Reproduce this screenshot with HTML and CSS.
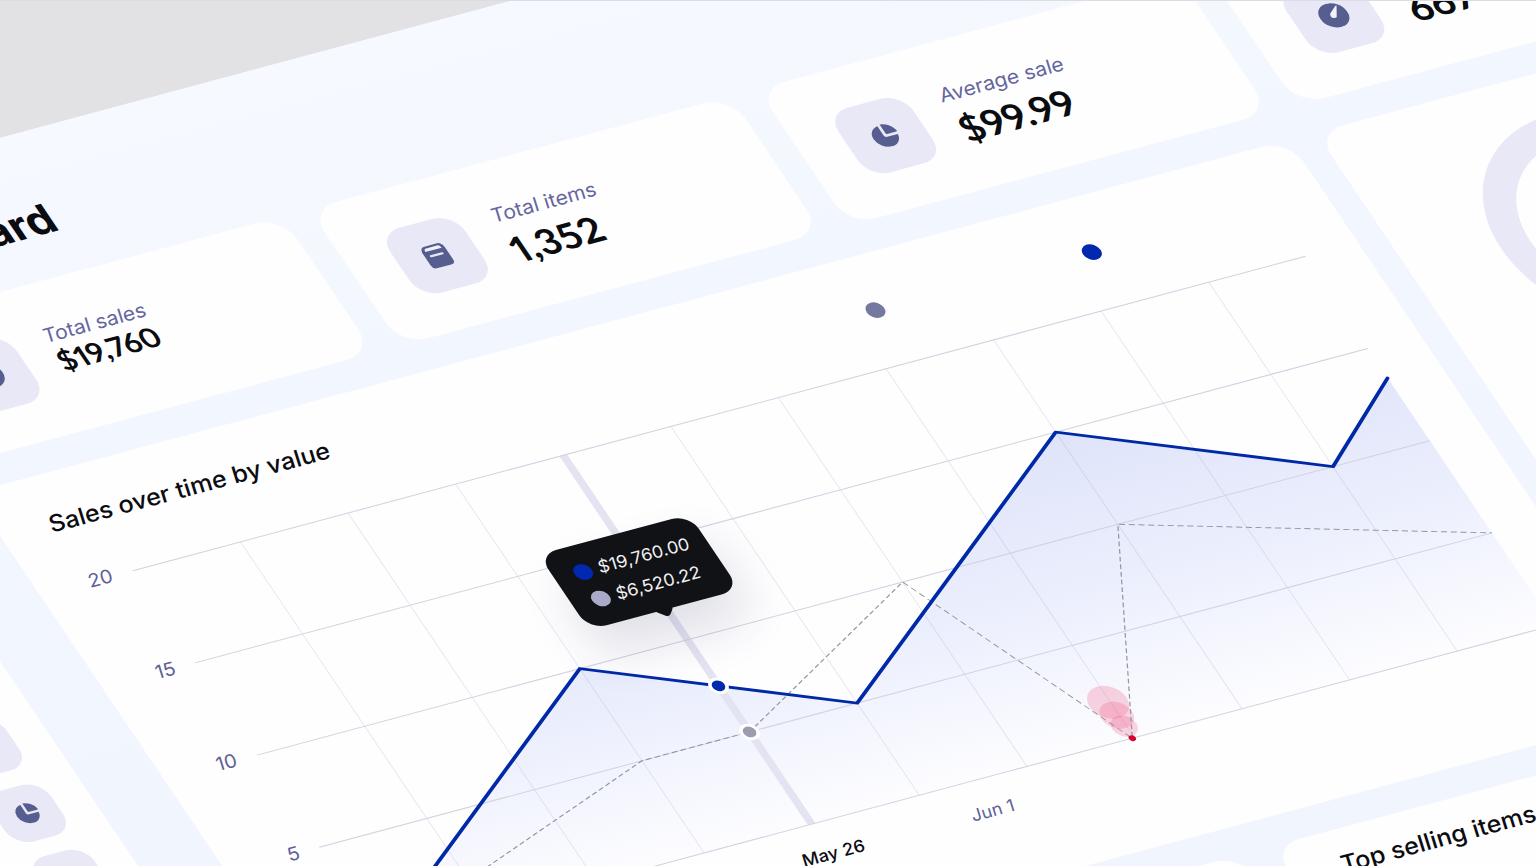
FILE: index.html
```
<!DOCTYPE html>
<html lang="en">
<head>
    <meta charset="UTF-8">
    <meta name="viewport" content="width=device-width, initial-scale=1.0">
    <title>Dashboard</title>
    <link rel="stylesheet" href="styles.css">
</head>
<body>
    <div class="scene">
        <div class="board">
            <nav class="sidebar" aria-label="Main">
                <a class="tile tile_small" href="#" aria-label="Home"></a>
                <a class="tile tile_small" href="#" aria-label="Sales"></a>
                <a class="tile tile_small" href="#" aria-label="Reports">
                    <svg class="icon" viewBox="0 0 24 24">
                        <path d="M10.5 2 A10.5 10.5 0 1 0 22 13.500 H12.500 Q10.500 13.500 10.500 11.500 Z"/>
                        <path d="M13 1 A11 11 0 0 1 23 10 Q23 11 22 11 H14 Q13 11 13 10 Z"/>
                    </svg>
                </a>
                <a class="tile tile_small" href="#" aria-label="Settings"></a>
            </nav>

            <main class="main">
                <h1>Dashboard</h1>

                <section class="cards">
                    <article class="card stat stat_compact">
                        <div class="tile">
                            <svg class="icon" viewBox="0 0 24 24"><circle cx="12" cy="12" r="12"/></svg>
                        </div>
                        <div class="stat_text">
                            <p class="stat_label upright">Total sales</p>
                            <p class="stat_value">$19,760</p>
                        </div>
                    </article>

                    <article class="card stat">
                        <div class="tile">
                            <svg class="icon" viewBox="0 0 24 24">
                                <path d="M6 1 H18 Q21 1 22 6 V19 Q22 23 18 23 H6 Q2 23 2 19 V6 Q3 1 6 1 Z"/>
                                <path class="icon_cut" d="M6.500 3 H17.500 Q18.700 3 19.300 6 H4.700 Q5.300 3 6.500 3 Z"/>
                                <path class="icon_line" d="M7 11 H17"/>
                            </svg>
                        </div>
                        <div class="stat_text">
                            <p class="stat_label upright">Total items</p>
                            <p class="stat_value">1,352</p>
                        </div>
                    </article>

                    <article class="card stat">
                        <div class="tile">
                            <svg class="icon" viewBox="0 0 24 24">
                                <path d="M10.5 2 A10.5 10.5 0 1 0 22 13.500 H12.500 Q10.500 13.500 10.500 11.500 Z"/>
                                <path d="M13 1 A11 11 0 0 1 23 10 Q23 11 22 11 H14 Q13 11 13 10 Z"/>
                            </svg>
                        </div>
                        <div class="stat_text">
                            <p class="stat_label upright">Average sale</p>
                            <p class="stat_value">$99.99</p>
                        </div>
                    </article>

                    <article class="card stat">
                        <div class="tile">
                            <svg class="icon" viewBox="0 0 24 24">
                                <circle cx="12" cy="12" r="12"/>
                                <path class="icon_cut" d="M19 4 L14 13 A2 2 0 0 1 9.500 11 Q9.500 10 11 9 L18 4 Z"/>
                            </svg>
                        </div>
                        <div class="stat_text">
                            <p class="stat_label">&nbsp;</p>
                            <p class="stat_value">667</p>
                        </div>
                    </article>

                    <article class="card sales">
                        <header class="sales_head">
                            <h2 class="upright">Sales over time by value</h2>
                            <ul class="legend">
                                <li><span class="dot dot_slate"></span></li>
                                <li><span class="dot dot_blue"></span></li>
                            </ul>
                        </header>

                        <div class="chart">
                            <ul class="y_axis">
                                <li><span class="upright">20</span></li>
                                <li><span class="upright">15</span></li>
                                <li><span class="upright">10</span></li>
                                <li><span class="upright">5</span></li>
                                <li><span class="upright">0</span></li>
                            </ul>

                            <div class="plot">
                                <!-- one column and one row of the grid are 100 units -->
                                <svg class="plot_svg" viewBox="0 0 1090 400" preserveAspectRatio="none">
                                    <defs>
                                        <linearGradient id="area_fill" gradientUnits="userSpaceOnUse" x1="0" y1="100" x2="0" y2="400">
                                            <stop offset="0" stop-color="#3c58dc" stop-opacity="0.16"/>
                                            <stop offset="0.5" stop-color="#4262e6" stop-opacity="0.1"/>
                                            <stop offset="1" stop-color="#5a70f0" stop-opacity="0.01"/>
                                        </linearGradient>
                                    </defs>
                                    <path class="grid_col" d="M100 0V400M200 0V400M300 0V400M500 0V400M600 0V400M700 0V400M800 0V400M900 0V400M1000 0V400"/>
                                    <path fill="url(#area_fill)" d="M0 400 L300 200 L500 300 L800 100 L1000 200 L1090 132 V400 Z"/>
                                    <path class="band" d="M400 0V400"/>
                                    <path class="grid_row" d="M0 0H1090M0 100H1090M0 200H1090M0 300H1090M0 400H1090"/>
                                    <circle class="pulse" cx="698" cy="361" r="17"/>
                                    <circle class="pulse" cx="698" cy="375" r="14"/>
                                    <circle class="pulse" cx="698" cy="387" r="11"/>
                                    <path class="line_past" d="M0 400 L300 300 L400 300 L600 200 L698 400 L800 200 L1090 300"/>
                                    <path class="line_now" d="M0 400 L300 200 L500 300 L800 100 L1000 200 L1090 132"/>
                                    <circle class="alert" cx="698" cy="400" r="3"/>
                                    <circle class="marker marker_blue" cx="400" cy="250" r="7"/>
                                    <circle class="marker marker_grey" cx="400" cy="300" r="7"/>
                                </svg>

                                <div class="tooltip">
                                    <p><span class="dot dot_blue"></span><span class="upright">$19,760.00</span></p>
                                    <p><span class="dot dot_grey"></span><span class="upright">$6,520.22</span></p>
                                </div>
                            </div>
                        </div>

                        <ul class="x_axis">
                            <li class="current"><span class="upright">May 26</span></li>
                            <li><span class="upright">Jun 1</span></li>
                            <li><span class="upright">Jun 7</span></li>
                        </ul>
                    </article>

                    <article class="card share">
                        <svg class="donut" viewBox="0 0 248 248">
                            <circle cx="124" cy="124" r="109"/>
                        </svg>
                    </article>
                </section>

                <section class="lists">
                    <article class="card"></article>
                    <article class="card">
                        <h2 class="upright">Top selling items</h2>
                    </article>
                </section>
            </main>
        </div>
    </div>
</body>
</html>
```
FILE: styles.css
```
* {
    box-sizing: border-box;
}

body {
    margin: 0;
    font-family: Inter, "Liberation Sans", sans-serif;
    color: #0b0c10;
    background-color: #e2e2e5;
}

h1, h2, p, ul {
    margin: 0;
    padding: 0;
    font-weight: normal;
}

ul {
    list-style-type: none;
}

.scene {
    position: relative;
    height: 100vh;
    overflow: hidden;
    border-top: 1px solid #dcdde2;
}

/* the whole dashboard lies on a tilted plane */
.board {
    position: absolute;
    top: 0;
    left: 0;
    display: flex;
    align-items: flex-start;
    gap: 74px;
    width: calc(100vw + 573px);
    padding: 0 40px 40px;
    background: linear-gradient(#f6f9ff, #f2f6fe 360px, #f0f4fc);
    transform-origin: 0 0;
    transform: matrix(0.966, -0.259, 0.557, 0.827, -460, 260);
}

/* small captions stand straight on the tilted baseline */
.upright {
    display: inline-block;
    transform-origin: 0 70%;
    transform: skewX(-16deg);
}

/* sidebar */
.sidebar {
    flex: none;
    display: flex;
    flex-direction: column;
    gap: 18px;
    margin-top: 471px;
    padding: 40px 35px 300px 31px;
    border-radius: 28px;
    background-color: #fefeff;
}

.tile {
    flex: none;
    display: flex;
    align-items: center;
    justify-content: center;
    width: 78px;
    height: 78px;
    border-radius: 22px;
    background-color: #e8e8f6;
}

.tile_small {
    width: 61px;
    height: 61px;
    border-radius: 20px;
}

.icon {
    width: 28px;
    height: 28px;
    fill: #565e90;
}

.tile_small .icon {
    width: 25px;
    height: 25px;
}

.icon_cut {
    fill: #f0f1fb;
}

.icon_line {
    fill: none;
    stroke: #e8e8f6;
    stroke-width: 2;
    stroke-linecap: round;
}

/* main */
.main {
    flex: 1;
    padding-top: 71px;
}

h1 {
    margin-bottom: 39px;
    font-size: 44px;
    line-height: 48px;
    font-weight: 700;
}

h2 {
    font-size: 25px;
    line-height: 32px;
    font-weight: 500;
}

.cards {
    display: grid;
    grid-template-columns: repeat(4, 1fr);
    gap: 33px 28px;
}

.card {
    border-radius: 28px;
    background-color: #fefeff;
}

.stat {
    display: flex;
    gap: 30px;
    padding: 44px 46px 43px;
}

.stat_label {
    color: #6466a0;
    font-size: 21px;
    line-height: 28px;
}

.stat_value {
    margin-top: 4px;
    font-family: Lato, "Liberation Sans", sans-serif;
    font-size: 39px;
    line-height: 44px;
    font-weight: 700;
    font-variant-numeric: proportional-nums;
}

.stat_compact .stat_value {
    margin-top: 0;
    font-size: 30px;
    line-height: 30px;
}

/* sales chart */
.sales {
    grid-column: span 3;
    padding: 38px 54px 46px 48px;
}

.sales_head {
    display: flex;
    align-items: flex-end;
    justify-content: space-between;
    margin-bottom: 54px;
}

.legend {
    display: flex;
    gap: 30px;
}

.legend li {
    width: 194px;
}

.dot {
    flex: none;
    display: block;
    width: 18px;
    height: 18px;
    border-radius: 50%;
}

.dot_slate {
    background-color: #75789f;
}

.dot_blue {
    background-color: #0029b0;
}

.dot_grey {
    background-color: #aaaac8;
}

.chart {
    display: flex;
    gap: 22px;
}

.y_axis {
    display: flex;
    flex-direction: column;
    align-items: flex-end;
    justify-content: space-between;
    width: 26px;
    margin: -13px 0 -11px;
    color: #5f6197;
    font-size: 20px;
    line-height: 24px;
}

.plot {
    flex: 1;
    position: relative;
}

.plot_svg {
    display: block;
    width: 100%;
    height: 446px;
    overflow: visible;
    fill: none;
}

.grid_col {
    stroke: #e9eaf0;
    stroke-width: 1;
}

.grid_row {
    stroke: #d2d3e0;
    stroke-width: 1;
}

.band {
    stroke: #e3e3f1;
    stroke-width: 7;
}

.line_now {
    stroke: #0029a8;
    stroke-width: 3;
    stroke-linejoin: round;
    stroke-linecap: round;
}

.line_past {
    stroke: #94959f;
    stroke-width: 1;
    stroke-dasharray: 5 3;
}

.pulse {
    fill: #f0507c;
    fill-opacity: 0.24;
}

.alert {
    fill: #d4002f;
}

.marker {
    stroke: #ffffff;
    stroke-width: 3;
}

.marker_blue {
    fill: #0029b0;
}

.marker_grey {
    fill: #9c9dac;
}

.tooltip {
    position: absolute;
    top: 95px;
    left: 36.5%;
    display: flex;
    flex-direction: column;
    justify-content: center;
    width: 156px;
    height: 91px;
    padding-left: 20px;
    border-radius: 18px;
    background-color: #101215;
    box-shadow: 0 32px 48px rgba(40, 46, 90, 0.14);
    color: #f1f1f4;
    font-size: 18px;
    line-height: 32px;
    font-weight: 300;
    transform: translateX(-50%);
}

.tooltip::after {
    content: "";
    position: absolute;
    bottom: -6px;
    left: 50%;
    width: 14px;
    height: 14px;
    margin-left: -7px;
    border-radius: 4px;
    background-color: #101215;
    transform: rotate(45deg);
}

.tooltip p {
    display: flex;
    align-items: center;
    gap: 5px;
}

.x_axis {
    display: grid;
    grid-template-columns: 175px 583px auto;
    margin-top: 24px;
    padding-left: 462px;
    color: #5f6197;
    font-size: 18px;
    line-height: 24px;
}

.x_axis .current {
    color: #0b0c10;
    font-weight: 500;
}

/* share */
.share {
    padding-top: 46px;
}

.donut {
    display: block;
    width: 248px;
    margin: 0 auto;
    fill: none;
    stroke: #e8e8f6;
    stroke-width: 30;
}

.lists {
    display: grid;
    grid-template-columns: 900px 1fr;
    gap: 32px;
    margin-top: 31px;
}

.lists .card {
    display: flex;
    align-items: flex-start;
    min-height: 420px;
    padding: 22px 48px;
}
```
